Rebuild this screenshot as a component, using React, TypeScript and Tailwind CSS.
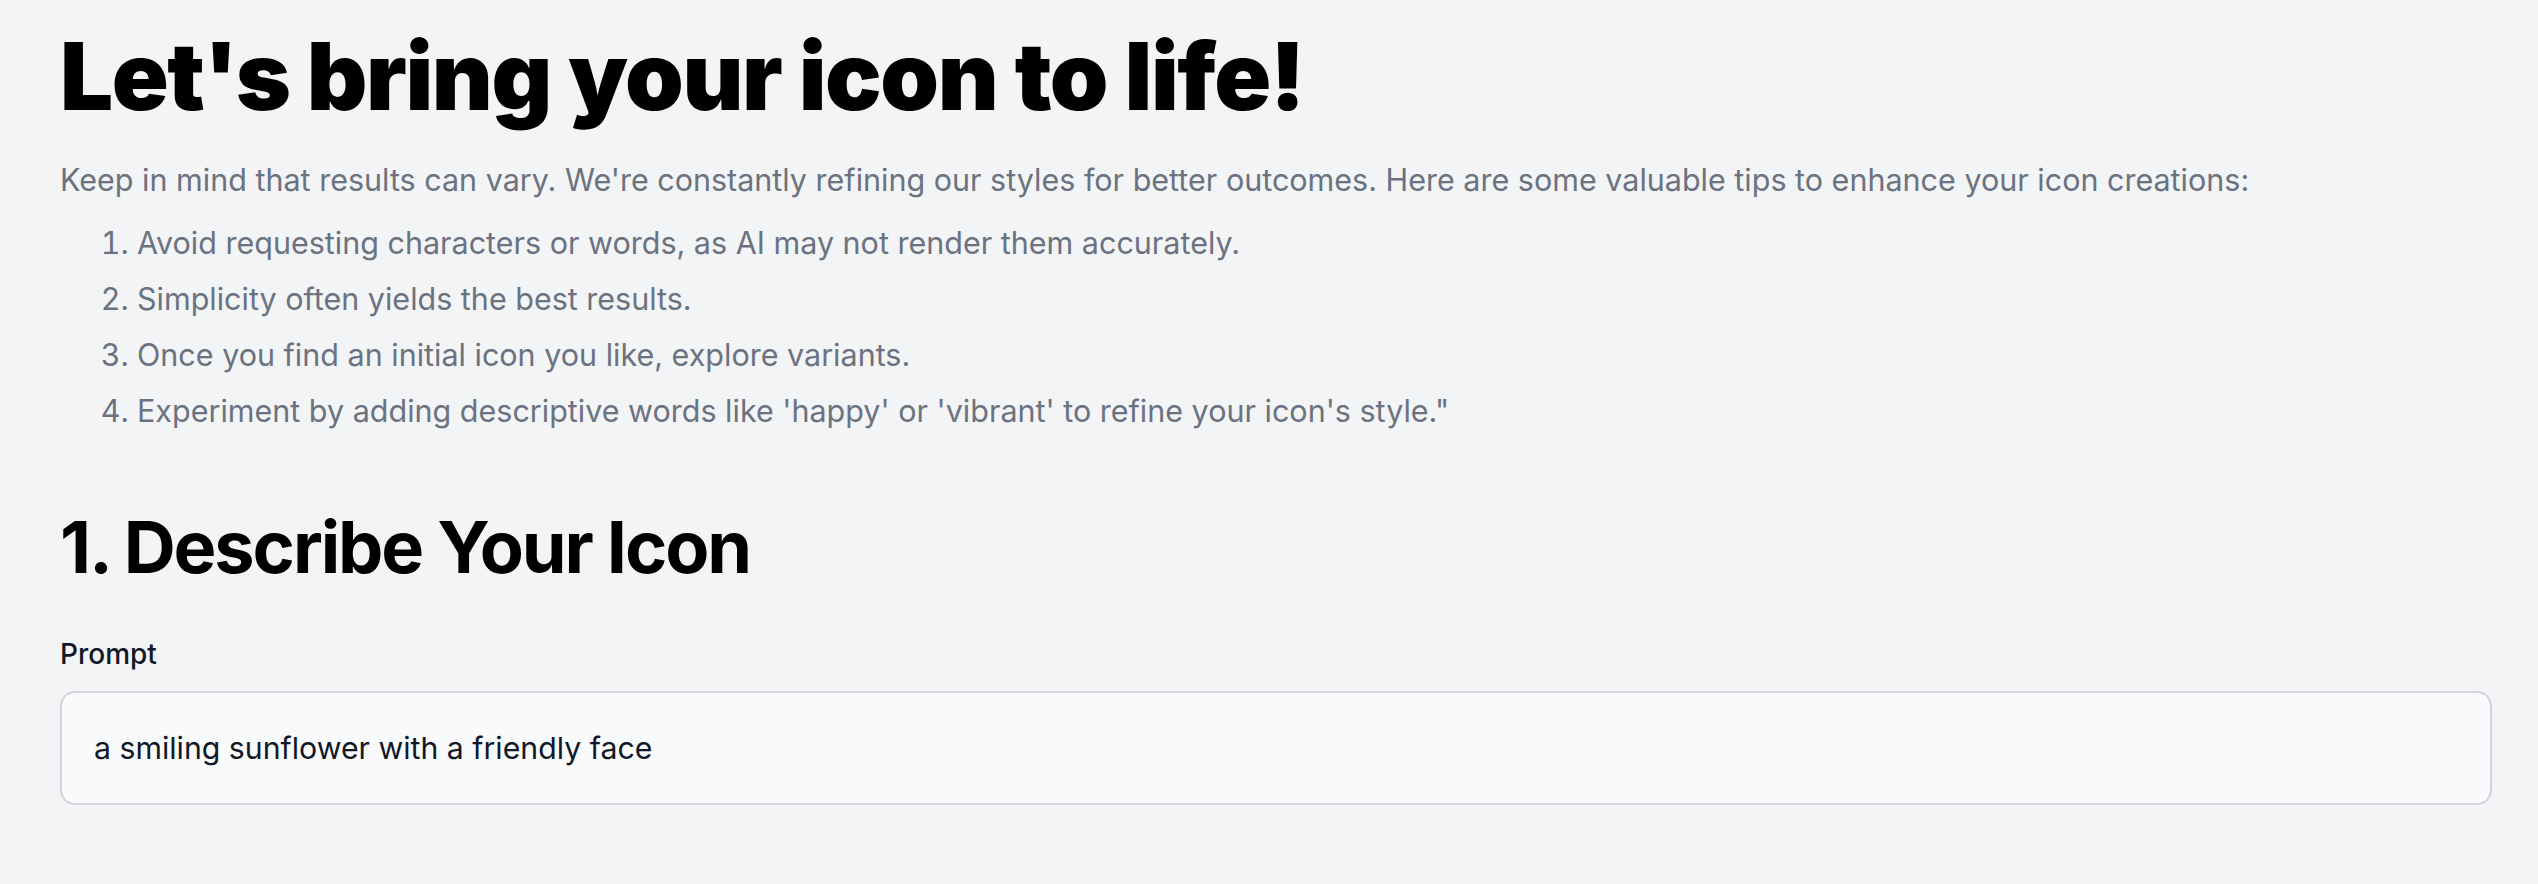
import React from "react";

const TIPS = [
  "Avoid requesting characters or words, as AI may not render them accurately.",
  "Simplicity often yields the best results.",
  "Once you find an initial icon you like, explore variants.",
  "Experiment by adding descriptive words like 'happy' or 'vibrant' to refine your icon's style.\"",
];

export default function App() {
  return (
    <div
      className="min-h-screen bg-[#f3f4f6] pl-[60px] pr-[46px] pt-[29px]"
      style={{ fontFamily: "Inter, 'Noto Sans', sans-serif" }}
    >
      <h1 className="text-[94px] leading-none font-black tracking-[-0.015em] text-black">
        Let's bring your icon to life!
      </h1>
      <p className="mt-[37px] text-[30.5px] leading-[40px] text-[#6b7280]">
        Keep in mind that results can vary. We're constantly refining our styles for better outcomes. Here are some
        valuable tips to enhance your icon creations:
      </p>
      <ol className="mt-[15px] list-decimal pl-[77px] text-[30.5px] leading-[56px] text-[#6b7280]">
        {TIPS.map((tip) => (
          <li key={tip}>{tip}</li>
        ))}
      </ol>

      <h2 className="mt-[72px] text-[72px] leading-none font-bold tracking-[-0.029em] text-black">
        1. Describe Your Icon
      </h2>

      <label htmlFor="prompt" className="mt-[53px] block text-[28px] leading-[36px] font-medium text-[#111827]">
        Prompt
      </label>
      <input
        id="prompt"
        type="text"
        defaultValue="a smiling sunflower with a friendly face"
        className="mt-[19px] block h-[114px] w-full rounded-[15px] border-2 border-[#d1d5db] bg-[#f9fafb] px-[32px] text-[30.25px] text-[#111827] outline-none"
      />
    </div>
  );
}
